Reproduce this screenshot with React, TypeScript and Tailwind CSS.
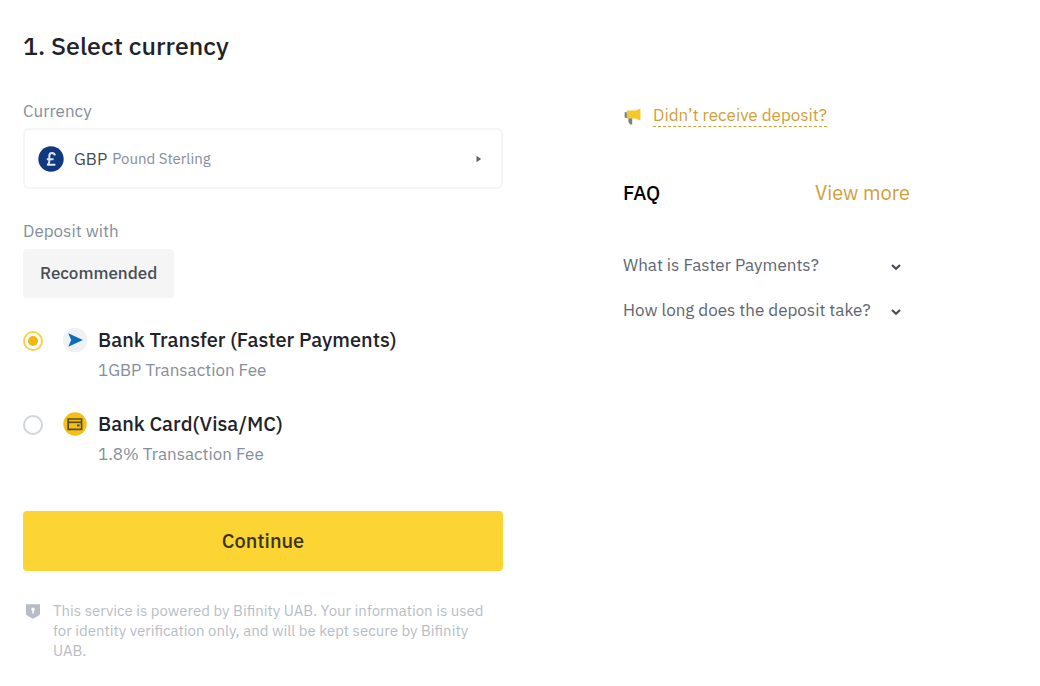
import { useState } from "react";

const currencies = [{ code: "GBP", name: "Pound Sterling" }];

const questions = ["What is Faster Payments?", "How long does the deposit take?"];

function PoundIcon() {
  return (
    <svg viewBox="0 0 26 26" className="size-[26px] shrink-0" aria-hidden="true">
      <circle cx="13" cy="13" r="12.7" fill="#11397f" />
      <path
        d="M17 9.4C16.5 7.8 15.4 7.1 14 7.1C12.2 7.1 11.3 8.3 11.3 10V15.6C11.3 17.2 10.6 18.2 9.2 18.8H17.4M8.8 13.2H15.6"
        fill="none"
        stroke="#dfe6f2"
        strokeWidth="2"
      />
    </svg>
  );
}

function TransferIcon() {
  return (
    <svg viewBox="0 0 26 26" className="size-[26px]" aria-hidden="true">
      <circle cx="13" cy="13" r="12.3" fill="#f0f1f2" />
      <path d="M6.3 6.2L20.9 13L6.3 19.8L9.2 13Z" fill="#0a6ebd" />
    </svg>
  );
}

function CardIcon() {
  return (
    <svg viewBox="0 0 26 26" className="size-[26px]" aria-hidden="true">
      <circle cx="13" cy="13" r="11.7" fill="#f3c01a" />
      <g fill="none" stroke="#5c4e22" strokeWidth="1.7">
        <path d="M6.2 8H19.6V18.3H6.2Z" />
        <path d="M6.2 11.3H19.6" />
      </g>
      <path d="M15 13.4H17.6V15.4H15Z" fill="#5c4e22" />
    </svg>
  );
}

function MegaphoneIcon() {
  return (
    <svg viewBox="0 0 20 20" className="size-5 shrink-0" aria-hidden="true">
      <path d="M1.6 6.3H5V12H2.4L1.6 11.2Z" fill="#76808f" />
      <path d="M5.4 12H9.2V18.4H7.2L5.4 16Z" fill="#76808f" />
      <path d="M3.8 4.4H12.5L17.4 2.4V14.6L12.5 12.4H3.8Z" fill="#f5c827" />
    </svg>
  );
}

function ShieldIcon() {
  return (
    <svg viewBox="0 0 20 20" className="size-5 shrink-0" aria-hidden="true">
      <path d="M3 3.2H17V13.2Q16.6 14.2 10 17.8Q3.4 14.2 3 13.2Z" fill="#b7bdc6" />
      <circle cx="10" cy="8.2" r="1.7" fill="#fff" />
      <path d="M9.2 8.5H10.8V12.4H9.2Z" fill="#fff" />
    </svg>
  );
}

function ChevronDown() {
  return (
    <svg viewBox="0 0 12 12" className="mt-1 size-3 shrink-0" aria-hidden="true">
      <path d="M2 4L6 7.7L10 4" fill="none" stroke="#474d57" strokeWidth="2.2" />
    </svg>
  );
}

const methods = [
  { id: "transfer", title: "Bank Transfer (Faster Payments)", fee: "1GBP Transaction Fee", Icon: TransferIcon },
  { id: "card", title: "Bank Card(Visa/MC)", fee: "1.8% Transaction Fee", Icon: CardIcon },
];

export default function App() {
  const [code, setCode] = useState("GBP");
  const [method, setMethod] = useState("transfer");
  const currency = currencies.find((c) => c.code === code) ?? currencies[0];

  return (
    <main className="grid min-h-screen grid-cols-[minmax(0,480px)_minmax(0,287px)] content-start gap-x-[120px] bg-white px-[23px] pt-[30px] pb-6 font-['IBM_Plex_Sans',Roboto,sans-serif] text-[17px] leading-6 text-[#1e2329]">
      <h1 className="col-span-2 text-[25px] leading-8 font-medium">1. Select currency</h1>

      <form className="mt-[37px]" onSubmit={(e) => e.preventDefault()}>
        <label htmlFor="currency" className="block text-[#848e9c]">
          Currency
        </label>
        <div className="relative mt-[5px] flex h-[61px] items-center rounded-md border-2 border-[#f5f5f5] px-[13px] focus-within:border-[#f0b90b]">
          <PoundIcon />
          <span className="ml-[10px] text-[#474d57]">{currency.code}</span>
          <span className="ml-[5px] text-[15px] text-[#848e9c]">{currency.name}</span>
          <svg viewBox="0 0 6 8" className="mr-[6px] ml-auto h-2 w-[6px]" aria-hidden="true">
            <path d="M0.5 0.8L5.2 4L0.5 7.2Z" fill="#5f6774" />
          </svg>
          <select
            id="currency"
            value={code}
            onChange={(e) => setCode(e.target.value)}
            className="absolute inset-0 size-full cursor-pointer opacity-0"
          >
            {currencies.map((c) => (
              <option key={c.code} value={c.code}>
                {c.code} {c.name}
              </option>
            ))}
          </select>
        </div>

        <fieldset className="mt-[30px]">
          <legend className="text-[#848e9c]">Deposit with</legend>
          <button
            type="button"
            className="mt-[6px] h-[49px] cursor-pointer rounded bg-[#f5f5f5] px-[17px] pb-[2px] font-medium text-[#474d57]"
          >
            Recommended
          </button>
          <div className="mt-7 flex flex-col gap-7">
            {methods.map(({ id, title, fee, Icon }) => (
              <label key={id} className="flex cursor-pointer items-start">
                <input
                  type="radio"
                  name="method"
                  value={id}
                  checked={method === id}
                  onChange={() => setMethod(id)}
                  className="mt-[5px] grid size-5 shrink-0 cursor-pointer appearance-none place-items-center rounded-full border-2 border-[#d0d4db] before:size-[10px] before:rounded-full checked:border-[#f7d24d] checked:before:bg-[#f0b90b]"
                />
                <span className="mt-px ml-[19px]">
                  <Icon />
                </span>
                <span className="ml-[10px] flex flex-col gap-1">
                  <span className="text-xl leading-7 font-medium">{title}</span>
                  <span className="text-[#848e9c]">{fee}</span>
                </span>
              </label>
            ))}
          </div>
        </fieldset>

        <button
          type="submit"
          className="mt-[45px] h-[60px] w-full cursor-pointer rounded bg-[#fcd535] text-xl font-medium text-[#3a3520]"
        >
          Continue
        </button>

        <div className="mt-[30px] flex gap-[10px] pr-3 text-[15px] leading-5 text-[#b7bdc6]">
          <ShieldIcon />
          <p>
            This service is powered by Bifinity UAB. Your information is used for identity verification only, and
            will be kept secure by Bifinity UAB.
          </p>
        </div>
      </form>

      <aside className="mt-[42px]">
        <div className="flex items-center gap-[10px]">
          <MegaphoneIcon />
          <a href="#deposit" className="border-b border-dashed border-[#d0a03a] leading-[22px] text-[#d0a03a]">
            Didn’t receive deposit?
          </a>
        </div>
        <div className="mt-[52px] flex items-center justify-between text-xl leading-7">
          <h2 className="font-medium text-black">FAQ</h2>
          <a href="#faq" className="text-[#d0a03a]">
            View more
          </a>
        </div>
        <div className="mt-[46px] flex flex-col gap-[21px] pr-2">
          {questions.map((q) => (
            <button key={q} type="button" className="flex cursor-pointer items-center justify-between text-left text-[#5e6673]">
              {q}
              <ChevronDown />
            </button>
          ))}
        </div>
      </aside>
    </main>
  );
}
